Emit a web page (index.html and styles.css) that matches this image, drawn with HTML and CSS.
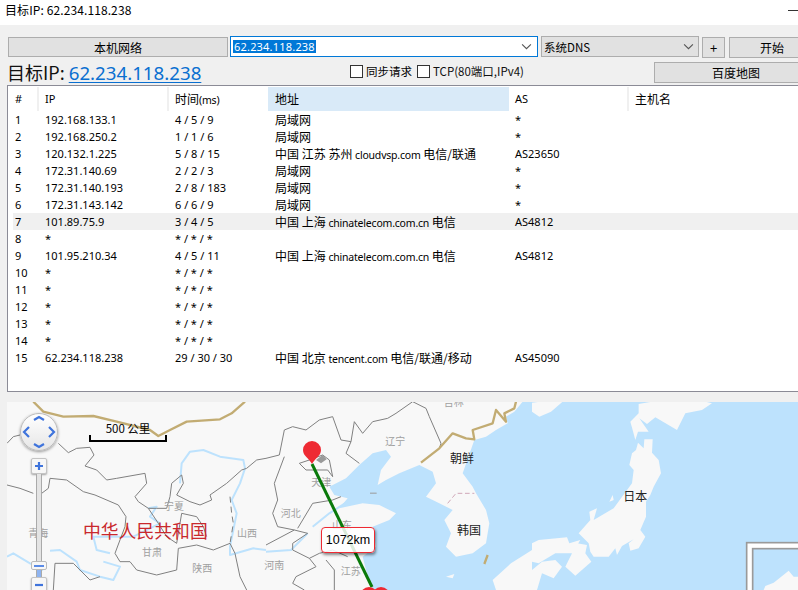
FILE: index.html
```html
<!DOCTYPE html>
<html lang="zh">
<head>
<meta charset="utf-8">
<title>目标IP</title>
<link rel="stylesheet" href="styles.css">
</head>
<body>
<div class="app">
  <header class="titlebar"><span>目标IP: 62.234.118.238</span><i class="min"></i></header>
  <div class="panel">
    <div class="toolbar">
      <button class="btn local">本机网络</button>
      <div class="combo"><span class="sel">62.234.118.238</span>
        <svg class="chev" viewBox="0 0 10 6"><path d="M1 1l4 4 4-4"/></svg></div>
      <div class="dns"><span>系统DNS</span>
        <svg class="chev" viewBox="0 0 10 6"><path d="M1 1l4 4 4-4"/></svg></div>
      <button class="btn plus">+</button>
      <button class="btn start">开始</button>
    </div>
    <div class="inforow">
      <h1 class="target">目标IP: <a href="#">62.234.118.238</a></h1>
      <label class="check sync"><i class="box"></i>同步请求</label>
      <label class="check tcp"><i class="box"></i>TCP(80端口,IPv4)</label>
      <button class="btn baidu">百度地图</button>
    </div>
    <section class="list">
      <div class="row head">
        <div class="c n">#</div><div class="c ip">IP</div><div class="c t">时间<span class="lat">(ms)</span></div><div class="c a active">地址</div><div class="c as">AS</div><div class="c h">主机名</div>
      </div>
      <div class="row"><div class="c n">1</div><div class="c ip">192.168.133.1</div><div class="c t">4 / 5 / 9</div><div class="c a">局域网</div><div class="c as">*</div><div class="c h"></div></div>
      <div class="row"><div class="c n">2</div><div class="c ip">192.168.250.2</div><div class="c t">1 / 1 / 6</div><div class="c a">局域网</div><div class="c as">*</div><div class="c h"></div></div>
      <div class="row"><div class="c n">3</div><div class="c ip">120.132.1.225</div><div class="c t">5 / 8 / 15</div><div class="c a">中国 江苏 苏州 <span class="lat">cloudvsp.com</span> 电信/联通</div><div class="c as">AS23650</div><div class="c h"></div></div>
      <div class="row"><div class="c n">4</div><div class="c ip">172.31.140.69</div><div class="c t">2 / 2 / 3</div><div class="c a">局域网</div><div class="c as">*</div><div class="c h"></div></div>
      <div class="row"><div class="c n">5</div><div class="c ip">172.31.140.193</div><div class="c t">2 / 8 / 183</div><div class="c a">局域网</div><div class="c as">*</div><div class="c h"></div></div>
      <div class="row"><div class="c n">6</div><div class="c ip">172.31.143.142</div><div class="c t">6 / 6 / 9</div><div class="c a">局域网</div><div class="c as">*</div><div class="c h"></div></div>
      <div class="row hl"><div class="c n">7</div><div class="c ip">101.89.75.9</div><div class="c t">3 / 4 / 5</div><div class="c a">中国 上海 <span class="lat">chinatelecom.com.cn</span> 电信</div><div class="c as">AS4812</div><div class="c h"></div></div>
      <div class="row"><div class="c n">8</div><div class="c ip">*</div><div class="c t">* / * / *</div><div class="c a"></div><div class="c as"></div><div class="c h"></div></div>
      <div class="row"><div class="c n">9</div><div class="c ip">101.95.210.34</div><div class="c t">4 / 5 / 11</div><div class="c a">中国 上海 <span class="lat">chinatelecom.com.cn</span> 电信</div><div class="c as">AS4812</div><div class="c h"></div></div>
      <div class="row"><div class="c n">10</div><div class="c ip">*</div><div class="c t">* / * / *</div><div class="c a"></div><div class="c as"></div><div class="c h"></div></div>
      <div class="row"><div class="c n">11</div><div class="c ip">*</div><div class="c t">* / * / *</div><div class="c a"></div><div class="c as"></div><div class="c h"></div></div>
      <div class="row"><div class="c n">12</div><div class="c ip">*</div><div class="c t">* / * / *</div><div class="c a"></div><div class="c as"></div><div class="c h"></div></div>
      <div class="row"><div class="c n">13</div><div class="c ip">*</div><div class="c t">* / * / *</div><div class="c a"></div><div class="c as"></div><div class="c h"></div></div>
      <div class="row"><div class="c n">14</div><div class="c ip">*</div><div class="c t">* / * / *</div><div class="c a"></div><div class="c as"></div><div class="c h"></div></div>
      <div class="row"><div class="c n">15</div><div class="c ip">62.234.118.238</div><div class="c t">29 / 30 / 30</div><div class="c a">中国 北京 <span class="lat">tencent.com</span> 电信/联通/移动</div><div class="c as">AS45090</div><div class="c h"></div></div>
    </section>
    <section class="map">
      <svg class="mapsvg" viewBox="7 402 791 188" width="791" height="188">
        <rect class="land" x="7" y="402" width="791" height="188"/>
        <g transform="translate(266 380) scale(.33333)">
          <path class="sea" d="M770 65L745 95 720 110 725 130 690 150 660 170 625 180 590 280 620 320 630 340 660 390 670 430 660 490 620 520 570 530 540 500 555 460 535 420 560 390 520 370 480 350 510 310 500 275 460 255 400 280 360 300 335 315 345 270 375 230 360 210 320 220 280 255 240 295 190 320 205 345 245 355 220 385 290 370 340 375 390 400 370 420 320 440 330 500 290 530 300 570 320 630 1596 630 1596 65Z"/>
          <path class="land" d="M798 68L825 65 890 65 855 95 820 110 798 95ZM680 600L735 550 798 510 798 630 690 630ZM540 590L565 582 560 595Z"/>
          <path class="river" d="M0 515L75 510 125 460M140 440L190 400 245 365"/>
          <path class="bd" d="M0 235L40 225 55 150 80 140 120 150 160 120 200 110 225 180 255 185 240 220 280 250M255 185L265 125 290 160 320 125 365 115 390 100 440 65 480 85 490 110 525 190 520 205M100 250L130 240 170 225 190 240 200 290 185 270 120 270 100 250M55 230L25 310 35 360 20 400 35 440 85 450 0 495M95 445L140 370 200 360 225 350M85 450L125 460 80 490 80 510 130 535 160 520 200 510 245 530M130 535L150 560 90 590 80 610 115 630M180 540L205 570 205 630"/>
          <path class="tan" d="M465 248L520 205 560 160 600 175 625 178 620 150 680 130 690 90 720 125 715 100 745 85 750 65M655 552L665 525"/>
          <path class="dmz" d="M545 370L570 340 625 340"/>
          <path class="blob" d="M150 240L170 225 182 238 165 250Z"/>
          <path class="blob" d="M312 338h20v3h-20Z"/>
          <text class="prov" x="388" y="194" text-anchor="middle">辽宁</text>
          <text class="prov" x="166" y="318" text-anchor="middle">天津</text>
          <text class="prov" x="74" y="410" text-anchor="middle">河北</text>
          <text class="prov" x="228" y="448" text-anchor="middle">山东</text>
          <text class="prov" x="25" y="567" text-anchor="middle">河南</text>
          <text class="prov" x="254" y="585" text-anchor="middle">江苏</text>
          <text class="prov" x="563" y="78" text-anchor="middle">吉林</text>
          <text class="country" x="588" y="248" text-anchor="middle">朝鲜</text>
          <text class="country" x="609" y="465" text-anchor="middle">韩国</text>
        </g>
        <g transform="translate(532 380) scale(.33333)">
          <path class="land" d="M320 72L360 65 520 65 540 70 510 90 460 100 435 150 370 112 345 132 322 115 350 155 318 155 310 180 302 150 295 125 320 100ZM318 188L335 205 337 178 362 178 360 218 380 240 387 280 365 320 355 345 342 365 342 410 325 450 340 470 320 505 295 512 290 490 305 478 270 498 255 525 250 505 230 530 185 530 175 515 170 490 140 460 175 420 172 395 195 385 185 420 245 385 300 310 305 270 292 255 300 220 312 210ZM0 490L20 480 105 472 112 490 145 480 120 520 70 520 20 550 0 545ZM100 560L135 490 165 495 160 520 178 545 130 587ZM0 570L30 545 70 540 90 560 65 595 30 580 15 630 0 630ZM232 365L242 345 245 360Z"/>
          <text class="country" x="310" y="362" text-anchor="middle">日本</text>
          <rect class="inset-o" x="644" y="488" width="200" height="200"/>
          <rect class="inset-i" x="662" y="506" width="200" height="200"/>
          <path class="land" d="M695 630L700 618 725 608 770 572 785 590 798 590 798 630Z"/>
        </g>
        <g transform="translate(0 380) scale(.33333)">
          <path class="river" d="M540 310L545 250 570 215 610 210 660 230 730 240 735 265 720 310 695 360 710 400 690 500 690 525 760 505 798 510M445 385L470 380 450 410 480 430 400 470 350 470 280 470 290 510 330 520M21 530L40 520 90 550 130 570M150 512L180 510 230 545 240 570 300 590 340 600 360 560 310 545"/>
          <path class="bd" d="M21 190L40 170 60 165M175 190L205 218 230 205 270 202 282 225 255 258 290 270 320 300 350 295 435 280 440 310 405 350 415 365 445 385 470 385 500 385 510 350 515 310 545 285 550 310 530 345 570 365 600 375 635 360 630 345 680 310 725 270 740 265 770 240 798 235M21 315L60 325 100 340M125 340L145 325 150 295 200 300 250 335 285 345 355 375 378 410 375 440 360 480 345 520 360 545 390 545 410 570 470 585 530 570 535 505 590 495 640 510 690 490 705 520 720 590 740 630M445 385L475 430 500 470 530 490 545 400 590 410 610 440 620 470M160 630L165 550 220 550 270 600 300 590"/>
          <path class="dash" d="M690 350L695 400 700 430 690 490"/>
          <path class="tan" d="M100 65L130 95 190 110 280 108 350 125 450 150 475 168 510 150 560 125 660 118 695 100 735 65"/>
          <text class="prov" x="115" y="471" text-anchor="middle">青海</text>
          <text class="prov" x="522" y="390" text-anchor="middle">宁夏</text>
          <text class="prov" x="741" y="471" text-anchor="middle">山西</text>
          <text class="prov" x="456" y="529" text-anchor="middle">甘肃</text>
          <text class="prov" x="607" y="575" text-anchor="middle">陕西</text>
          <text class="cn" x="436" y="473" text-anchor="middle">中华人民共和国</text>
        </g>
        <path class="route" d="M312 464L372 587"/>
        <path class="pin" d="M312 464C309 458 303 456 303 450a9 9 0 0 1 18 0c0 6-6 8-9 14Z"/>
        <circle class="pin" cx="369" cy="596" r="9"/>
        <circle class="pin" cx="381" cy="596" r="9"/>
        <text class="scale-t" x="128" y="433" text-anchor="middle">500 公里</text>
        <path class="scale-b" d="M90 435v6h76v-6"/>
      </svg>
      <div class="dist">1072km</div>
      <div class="nav">
        <svg viewBox="0 0 38 38" width="38" height="38"><path class="arrow" d="M14 7l5-3 5 3M14 31l5 3 5-3M9 14l-5 5 5 5M29 14l5 5-5 5"/></svg>
      </div>
      <div class="zoom">
        <button class="zb"><svg viewBox="0 0 10 10" width="10" height="10"><path class="arrow" d="M5 1v8M1 5h8"/></svg></button>
        <div class="track"><div class="thumb"><i></i></div><div class="fill"></div></div>
        <button class="zb"><svg viewBox="0 0 10 10" width="10" height="10"><path class="arrow" d="M1 5h8"/></svg></button>
      </div>
    </section>
  </div>
</div>
</body>
</html>
```
FILE: styles.css
```css
* { box-sizing: border-box; }
html, body { margin: 0; padding: 0; width: 798px; height: 590px; overflow: hidden; }
body { font-family: "Noto Sans", "Noto Sans CJK SC", sans-serif; font-size: 12px; color: #000; background: #f0f0f0; }
.app { font-family: "Noto Sans CJK SC", "Noto Sans", sans-serif; width: 798px; height: 590px; overflow: hidden; }

.titlebar { height: 25px; background: #fff; display: flex; justify-content: space-between; align-items: flex-start; padding: 1px 0 0 5px; line-height: 18px; font-size: 12px; letter-spacing: .1px; }
.min { width: 10px; height: 1px; background: #333; margin-top: 9px; }

.panel { padding: 11px 0 0 7px; width: 830px; }
.toolbar { display: flex; align-items: flex-start; height: 21px; }
.btn { background: #e1e1e1; border: 1px solid #adadad; padding: 0; font: inherit; font-size: 12px; color: #000; border-radius: 0; }
.local { width: 220px; height: 20px; margin: 1px 0 0 1px; line-height: 17px; }
.combo { width: 308px; height: 21px; margin-left: 2px; border: 1px solid #0078d7; background: #fff; display: flex; align-items: center; justify-content: space-between; padding: 0 3px 0 2px; }
.sel { background: #0078d7; color: #fff; font-family: "Noto Sans", sans-serif; font-size: 11px; line-height: 13px; height: 13px; padding: 0 1px; display: block; letter-spacing: .2px; }
.chev { width: 11px; height: 7px; fill: none; stroke: #555; stroke-width: 1; margin-right: 2px; }
.dns { width: 158px; height: 21px; margin-left: 3px; border: 1px solid #adadad; background: #e1e1e1; display: flex; align-items: center; justify-content: space-between; padding: 0 2px 0 2px; font-size: 11.5px; }
.plus { width: 23px; height: 21px; margin: 1px 0 0 3px; font-size: 13px; }
.start { width: 90px; height: 21px; margin: 1px 0 0 4px; padding-right: 4px; }

.inforow { display: flex; align-items: flex-start; height: 28px; padding-top: 4px; }
.target { margin: -1px 0 0; font-weight: 400; font-size: 18px; line-height: 24px; width: 343px; color: #111; white-space: nowrap; }
.target a { color: #0a6fd0; text-decoration: underline; text-underline-offset: 2px; font-family: "Noto Sans", sans-serif; font-size: 18.7px; }
.check { display: flex; align-items: center; gap: 3px; height: 14px; font-size: 11.5px; margin-top: 3px; white-space: nowrap; }
.box { width: 13px; height: 13px; border: 1px solid #333; background: #fff; display: block; }
.sync { width: 67px; }
.tcp { width: 237px; color: #111; }
.baidu { width: 170px; height: 21px; margin-top: 1px; padding-right: 6px; }

.list { width: 830px; height: 307px; border: 1px solid #8b8b96; background: #fff; padding: 1px 0 0 5px; }
.row { display: grid; grid-template-columns: 26px 130px 99px 241px 120px 1fr; height: 17px; line-height: 17px; font-size: 11px; font-family: "Noto Sans", "Noto Sans CJK SC", sans-serif; }
.row .a { font-size: 12px; font-family: "Noto Sans CJK SC", "Noto Sans", sans-serif; padding-left: 7px; white-space: nowrap; }
.lat { font-family: "Noto Sans", sans-serif; font-size: 10.5px; letter-spacing: -.2px; }
.c { padding-left: 6px; overflow: hidden; }
.c.n { padding-left: 2px; }
.row.hl { background: #f0f0f0; }
.row.head { height: 24px; line-height: 24px; }
.head .c { border-right: 2px solid #f0f0f0; }
.head .t, .head .h { font-size: 12px; font-family: "Noto Sans CJK SC", "Noto Sans", sans-serif; }
.head .t .lat { font-size: 10.5px; }
.head .c.a { background: #d9eaf8; border-right: 0; }
.head .c.as { border-right: 2px solid #f0f0f0; }
.head .c.h { border-right: 0; }
.head .c.t { border-right: 0; }

.map { position: relative; width: 791px; height: 188px; margin-top: 10px; overflow: hidden; }
.mapsvg { display: block; }
.land { fill: #f8f8f8; }
.sea { fill: #bde2fd; }
.river { fill: none; stroke: #bde2fd; stroke-width: 6; stroke-linejoin: round; }
.bd { fill: none; stroke: #808080; stroke-width: 3; stroke-linejoin: round; }
.dash { fill: none; stroke: #808080; stroke-width: 3; stroke-dasharray: 18 12; }
.tan { fill: none; stroke: #c2ac73; stroke-width: 7; stroke-linejoin: round; }
.dmz { fill: none; stroke: #d0a8b8; stroke-width: 3; stroke-dasharray: 14 8; }
.blob { fill: #9a9a9a; }
.prov { font-size: 30px; fill: #a0a0a0; }
.country { font-size: 36px; fill: #222; }
.cn { font-size: 53.5px; fill: #c9282d; }
.inset-o { fill: #fff; stroke: #9a9a9a; stroke-width: 5; }
.inset-i { fill: #bde2fd; stroke: #9a9a9a; stroke-width: 5; }
.route { fill: none; stroke: #0a7a0a; stroke-width: 3; }
.pin { fill: #ee2a33; }
.scale-t { font-size: 11.5px; fill: #000; }
.scale-b { fill: none; stroke: #000; stroke-width: 2; }
.dist { position: absolute; left: 314px; top: 125px; width: 54px; height: 26px; border: 1px solid #ee2a33; border-radius: 4px; background: rgba(255,255,255,.85); box-shadow: 1px 2px 3px rgba(0,0,0,.45); font-family: "Liberation Sans", sans-serif; font-size: 12.5px; line-height: 24px; text-align: center; }
.nav { position: absolute; left: 13px; top: 11px; width: 38px; height: 38px; border-radius: 50%; background: linear-gradient(#fff, #e6e6e6); border: 1px solid #bbb; box-shadow: 0 1px 3px rgba(0,0,0,.4); }
.nav svg { display: block; margin: -1px; }
.arrow { fill: none; stroke: #3f74dc; stroke-width: 2.2; }
.zoom { position: absolute; left: 24px; top: 56px; width: 16px; display: flex; flex-direction: column; align-items: center; }
.zb { width: 16px; height: 16px; padding: 0; background: #f7f7f7; border: 1px solid #c4c4c4; border-radius: 2px; box-shadow: 0 1px 2px rgba(0,0,0,.35); display: flex; align-items: center; justify-content: center; flex: none; }
.track { width: 6px; height: 103px; background: #e4e4e4; border-left: 1px solid #aaa; border-right: 1px solid #aaa; position: relative; flex: none; }
.thumb { position: absolute; left: -6px; top: 87px; width: 16px; height: 9px; background: #f7f7f7; border: 1px solid #bbb; border-radius: 2px; display: flex; align-items: center; justify-content: center; }
.thumb i { width: 10px; height: 2px; background: #5b8be6; display: block; }
.fill { position: absolute; left: 0; right: 0; top: 96px; bottom: 0; background: #8fb4f0; }
```
